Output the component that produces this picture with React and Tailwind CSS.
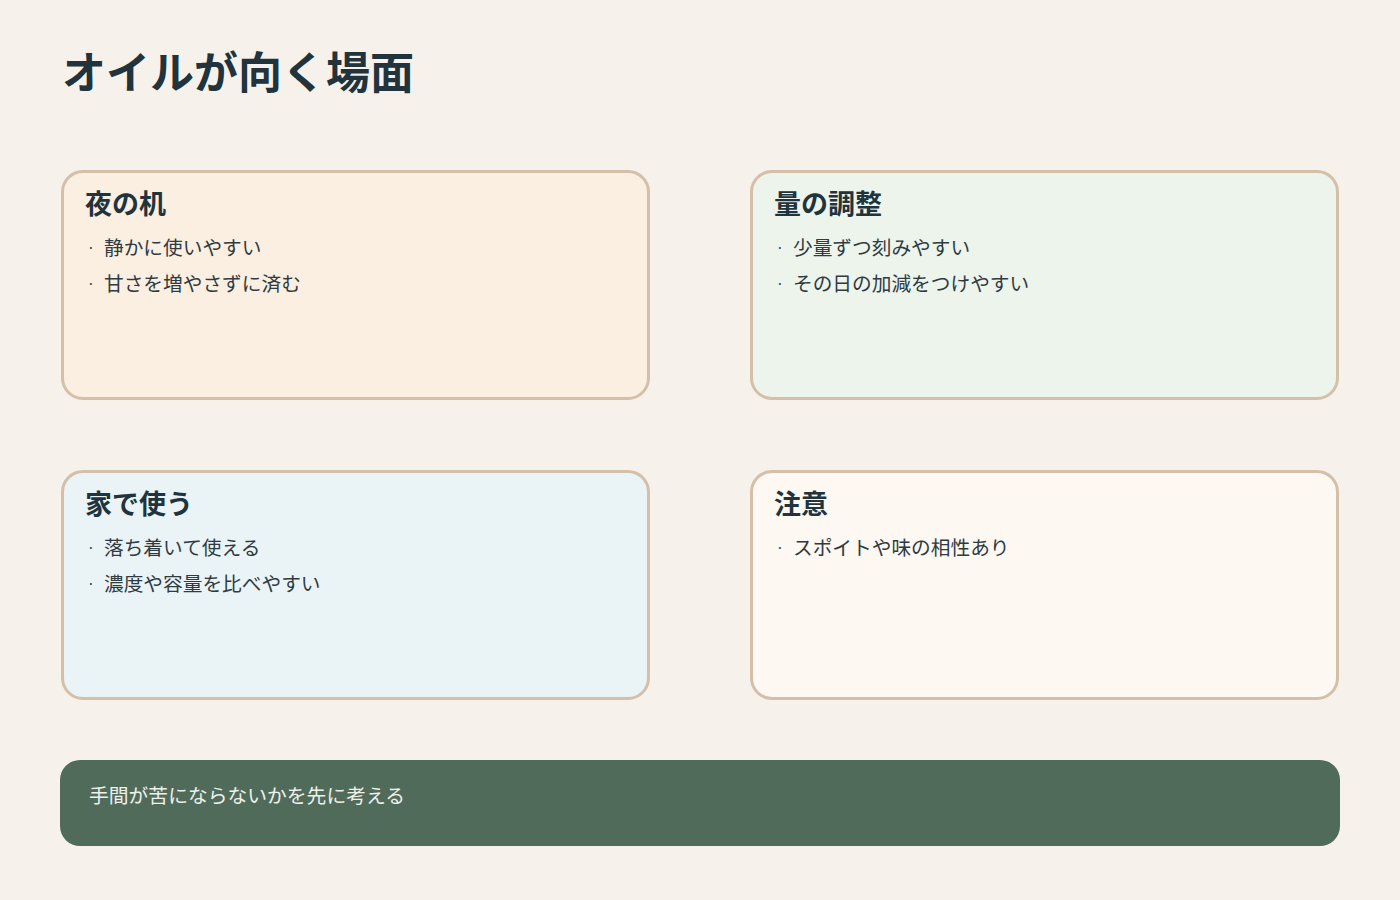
export default function App() {
  const cards = [
    { t: "夜の机", bg: "bg-[#faefe1]", items: ["静かに使いやすい", "甘さを増やさずに済む"] },
    { t: "量の調整", bg: "bg-[#edf4ec]", items: ["少量ずつ刻みやすい", "その日の加減をつけやすい"] },
    { t: "家で使う", bg: "bg-[#eaf3f5]", items: ["落ち着いて使える", "濃度や容量を比べやすい"] },
    { t: "注意", bg: "bg-[#fdf8f1]", items: ["スポイトや味の相性あり"] },
  ];
  return (
    <div className="w-[1400px] h-[900px] bg-[#f6f2eb] px-[60px] pt-[40px] text-[#21333c]" style={{ fontFamily: '"Noto Sans CJK JP", sans-serif' }}>
      <h1 className="text-[44px] font-bold leading-[60px] ml-[2px]">オイルが向く場面</h1>
      <div className="grid grid-cols-2 gap-x-[100px] gap-y-[70px] mt-[70px] px-[1px]">
        {cards.map((c) => (
          <div key={c.t} className={`${c.bg} h-[230px] rounded-[22px] border-[3px] border-[#d4bfa8] px-[21px] pt-[10px]`}>
            <div className="text-[27px] font-bold leading-[40px]">{c.t}</div>
            <div className="mt-[6px]">
              {c.items.map((i) => (
                <div key={i} className="flex items-center text-[19.7px] leading-[36px] text-[#2e3b42]">
                  <span className="w-[19px] pl-[2px] text-[14px]">·</span>
                  <span>{i}</span>
                </div>
              ))}
            </div>
          </div>
        ))}
      </div>
      <div className="mt-[60px] h-[86px] rounded-[20px] bg-[#516b5a] px-[29px] pt-[20px] text-[19.8px] leading-[30px] text-[#eef0ea]">
        手間が苦にならないかを先に考える
      </div>
    </div>
  );
}
